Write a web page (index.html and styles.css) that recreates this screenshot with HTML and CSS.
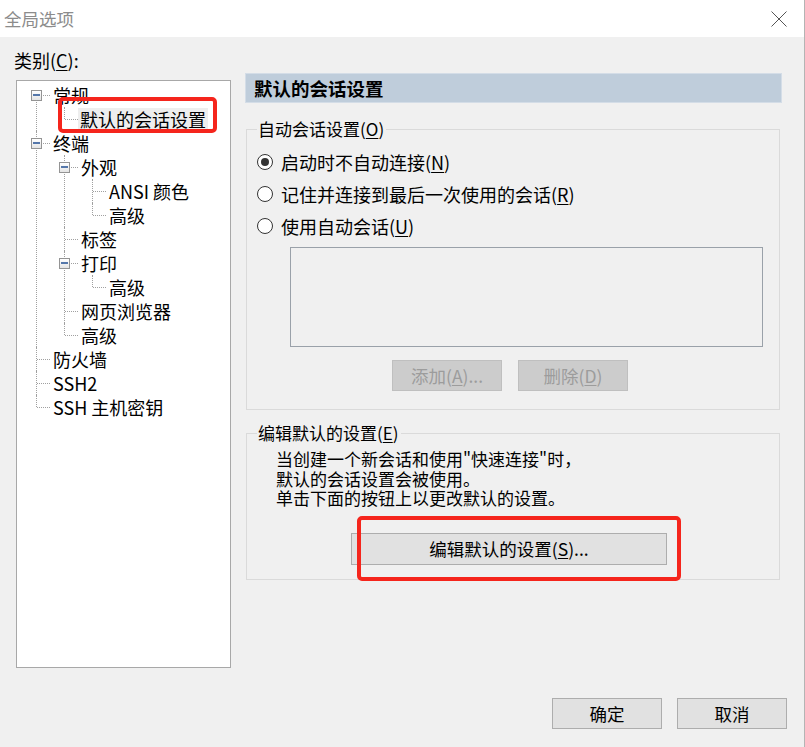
FILE: index.html
```html
<!DOCTYPE html>
<html lang="zh-CN">
<head>
  <meta charset="UTF-8">
  <title>全局选项</title>
  <link rel="stylesheet" href="styles.css">
</head>
<body>

<div class="window">
  <div class="titlebar">
    <span class="title">全局选项</span>
    <svg class="close" width="16" height="16" viewBox="0 0 16 16">
      <path d="M0.5 0.5 L15.5 15.5 M15.5 0.5 L0.5 15.5" stroke="#555" stroke-width="1" fill="none"/>
    </svg>
  </div>

  <div class="content">
    <div class="left">
      <div class="cat-label">类别(<u>C</u>):</div>
      <div class="tree-box">
        <ul class="tree">
          <li>
            <div class="node"><span class="exp"></span>常规</div>
            <ul>
              <li><div class="node"><span class="sel">默认的会话设置</span></div></li>
            </ul>
          </li>
          <li>
            <div class="node"><span class="exp"></span>终端</div>
            <ul>
              <li>
                <div class="node"><span class="exp"></span>外观</div>
                <ul>
                  <li><div class="node">ANSI 颜色</div></li>
                  <li><div class="node">高级</div></li>
                </ul>
              </li>
              <li><div class="node">标签</div></li>
              <li>
                <div class="node"><span class="exp"></span>打印</div>
                <ul>
                  <li><div class="node">高级</div></li>
                </ul>
              </li>
              <li><div class="node">网页浏览器</div></li>
              <li><div class="node">高级</div></li>
            </ul>
          </li>
          <li><div class="node">防火墙</div></li>
          <li><div class="node">SSH2</div></li>
          <li><div class="node">SSH 主机密钥</div></li>
        </ul>
      </div>
    </div>

    <div class="right">
      <div class="page-header">默认的会话设置</div>

      <fieldset class="group group-auto">
        <legend>自动会话设置(<u>O</u>)</legend>
        <div class="radio-row"><span class="radio checked"></span><span>启动时不自动连接(<u>N</u>)</span></div>
        <div class="radio-row"><span class="radio"></span><span>记住并连接到最后一次使用的会话(<u>R</u>)</span></div>
        <div class="radio-row"><span class="radio"></span><span>使用自动会话(<u>U</u>)</span></div>
        <div class="listbox"></div>
        <div class="list-buttons">
          <button class="button" disabled>添加(<u>A</u>)...</button>
          <button class="button" disabled>删除(<u>D</u>)</button>
        </div>
      </fieldset>

      <fieldset class="group group-edit">
        <legend>编辑默认的设置(<u>E</u>)</legend>
        <div class="desc">
          <div>当创建一个新会话和使用"快速连接"时，</div>
          <div>默认的会话设置会被使用。</div>
          <div>单击下面的按钮上以更改默认的设置。</div>
        </div>
        <button class="button edit-button">编辑默认的设置(<u>S</u>)...</button>
      </fieldset>
    </div>
  </div>

  <div class="footer">
    <button class="button">确定</button>
    <button class="button">取消</button>
  </div>

  <div class="mark mark-tree"></div>
  <div class="mark mark-edit"></div>
</div>

</body>
</html>
```

FILE: styles.css
```css
body {
  margin: 0;
  font-family: "Noto Sans CJK SC", "Microsoft YaHei", sans-serif;
  color: #000;
}

.window {
  position: relative;
  width: 805px;
  height: 747px;
  box-sizing: border-box;
  background-color: #f0f0f0;
  border-right: 1px solid #b4b4b4;
  overflow: hidden;
}

.titlebar {
  display: flex;
  justify-content: space-between;
  align-items: center;
  height: 37px;
  padding: 0 17px 0 4px;
  background-color: white;
}

.title {
  font-size: 17.5px;
  color: #8c8c8c;
}

.close {
  display: block;
  margin-top: 1px;
}

.content {
  display: grid;
  grid-template-columns: 217px 1fr;
  column-gap: 14px;
  padding: 13px 22px 0 14px;
}

.cat-label {
  font-size: 18px;
  line-height: 20px;
  height: 20px;
}

u {
  text-decoration-thickness: 1px;
  text-underline-offset: 2px;
}

.tree-box {
  margin: 10px 0 0 2px;
  width: 215px;
  height: 588px;
  box-sizing: border-box;
  border: 1px solid #a8a8a8;
  background-color: white;
  padding-top: 2px;
}

.tree,
.tree ul {
  list-style: none;
  margin: 0;
  padding: 0;
}

.tree ul {
  margin-left: 28px;
}

.tree li {
  position: relative;
}

.tree li::before {
  content: "";
  position: absolute;
  left: 19px;
  top: 0;
  bottom: 0;
  border-left: 1px dotted #a0a0a0;
}

.tree li:last-child::before {
  bottom: auto;
  height: 12px;
}

.tree > li:first-child::before {
  top: 12px;
}

.node {
  position: relative;
  height: 24px;
  line-height: 24px;
  padding-left: 36px;
  font-size: 18px;
  white-space: nowrap;
}

.node::before {
  content: "";
  position: absolute;
  left: 20px;
  top: 12px;
  width: 13px;
  border-top: 1px dotted #a0a0a0;
}

.exp {
  position: absolute;
  left: 14px;
  top: 7px;
  width: 9px;
  height: 9px;
  border: 1px solid #949494;
  background: linear-gradient(#ffffff, #e4e4e4);
}

.exp::after {
  content: "";
  position: absolute;
  left: 1px;
  top: 3px;
  width: 7px;
  height: 2px;
  background-color: #5577aa;
}

.sel {
  display: inline-block;
  line-height: 22px;
  margin-left: -3px;
  padding: 0 2px;
  background-color: #eeeeee;
}

.right {
  display: flex;
  flex-direction: column;
}

.page-header {
  margin-top: 23px;
  height: 30px;
  box-sizing: border-box;
  line-height: 28px;
  padding-left: 8px;
  font-size: 18.5px;
  font-weight: bold;
  background-color: #bfcddb;
  border: 1px solid #d4dde7;
}

.group {
  width: 534px;
  box-sizing: border-box;
  margin: 0 0 0 1px;
  padding: 0 16px 0 10px;
  border: 1px solid #dadada;
  min-width: 0;
}

.group legend {
  font-size: 17px;
  line-height: 20px;
  padding: 0 2px 0 1px;
}

.group-auto {
  margin-top: 16px;
  padding-top: 7px;
  padding-bottom: 18px;
}

.radio-row {
  display: flex;
  align-items: center;
  gap: 8px;
  height: 32px;
  font-size: 18px;
}

.radio {
  position: relative;
  width: 16px;
  height: 16px;
  box-sizing: border-box;
  border: 1.5px solid #333;
  border-radius: 50%;
  background-color: white;
  flex-shrink: 0;
}

.radio.checked::after {
  content: "";
  position: absolute;
  left: 2.5px;
  top: 2.5px;
  width: 8px;
  height: 8px;
  border-radius: 50%;
  background-color: #333;
}

.listbox {
  margin: 5px 0 0 33px;
  height: 100px;
  box-sizing: border-box;
  border: 1px solid #9aa1a9;
}

.list-buttons {
  display: flex;
  gap: 16px;
  margin: 13px 0 0 135px;
}

.button {
  height: 31px;
  width: 110px;
  box-sizing: border-box;
  padding: 0;
  border: 1px solid #adadad;
  background-color: #e1e1e1;
  font-family: inherit;
  font-size: 17.5px;
  color: #000;
}

.button:disabled {
  background-color: #cccccc;
  border-color: #bfbfbf;
  color: #9c9c9c;
}

.group-edit {
  margin-top: 13px;
  padding-top: 6px;
  padding-bottom: 14px;
}

.desc {
  margin: 0 0 0 19px;
  font-size: 17px;
  line-height: 19.5px;
}

.edit-button {
  display: block;
  margin: 25px 0 0 94px;
  width: 316px;
  height: 32px;
}

.footer {
  display: flex;
  justify-content: flex-end;
  gap: 15px;
  margin-top: 30px;
  padding-right: 17px;
}

.mark {
  position: absolute;
  box-sizing: border-box;
  border: 4px solid #f5251c;
  border-radius: 5px;
}

.mark-tree {
  left: 58px;
  top: 97px;
  width: 159px;
  height: 36px;
}

.mark-edit {
  left: 357px;
  top: 516px;
  width: 324px;
  height: 65px;
}
```
